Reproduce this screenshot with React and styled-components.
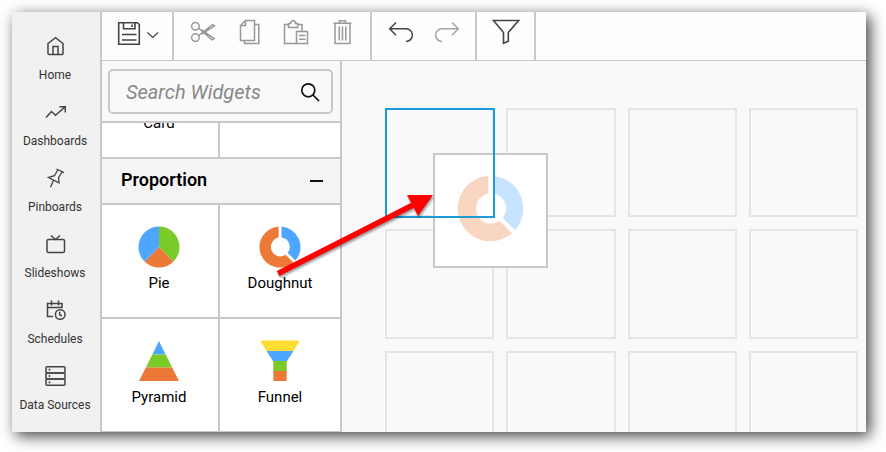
import React from "react";
import styled, { createGlobalStyle } from "styled-components";

const LINE = "#c8c8c8";

const GlobalStyle = createGlobalStyle`
  *, *::before, *::after { box-sizing: border-box; }
  body {
    margin: 0;
    background: #fff;
    font-family: Roboto, "Liberation Sans", sans-serif;
    color: #000;
  }
  button { font: inherit; color: inherit; }
`;

const Frame = styled.div`
  position: relative;
  display: flex;
  height: calc(100vh - 32px);
  margin: 12px 20px 20px 12px;
  background: #f9f9f9;
  box-shadow: 4px 4px 14px rgba(0, 0, 0, 0.75);
`;

const Sidebar = styled.nav`
  flex: none;
  display: flex;
  flex-direction: column;
  gap: 18px;
  width: 90px;
  padding: 23px 2px 0 0;
  overflow: hidden;
  background: #f1f1f1;
  border-right: 2px solid ${LINE};
`;

const NavLink = styled.a`
  display: flex;
  flex-direction: column;
  align-items: center;
  gap: 10px;
  color: #333;
  font-size: 12px;
  line-height: 16px;
  white-space: nowrap;
  text-decoration: none;
`;

const LineIcon = styled.svg`
  flex: none;
  display: block;
  fill: none;
  stroke: ${(p) => p.$color || "#444"};
  stroke-width: ${(p) => p.$weight || 1.5};
`;

const Main = styled.div`
  flex: 1;
  min-width: 0;
  display: flex;
  flex-direction: column;
`;

const Toolbar = styled.div`
  flex: none;
  display: grid;
  grid-template-columns: 72px 198px 105px 59px 1fr;
  height: 49px;
  background: #fdfdfd;
  border-bottom: 1px solid ${LINE};
`;

const ToolGroup = styled.div`
  display: flex;
  align-items: flex-start;
  gap: ${(p) => p.$gap || 0}px;
  padding: 4px 0 0 13px;
  border-right: 2px solid ${LINE};
`;

const ToolButton = styled.button`
  display: flex;
  align-items: center;
  height: 32px;
  padding: 0;
  background: none;
  border: 0;
`;

const Workspace = styled.div`
  flex: 1;
  min-height: 0;
  display: flex;
`;

const Panel = styled.aside`
  flex: none;
  width: 240px;
  overflow: hidden;
  background: #fff;
  border-right: 2px solid ${LINE};
`;

const SearchArea = styled.div`
  padding: 8px 7px 7px 6px;
  background: #f9f9f9;
  border-bottom: 2px solid ${LINE};
`;

const SearchBox = styled.label`
  display: flex;
  align-items: center;
  height: 45px;
  padding: 0 11px 0 16px;
  border: 2px solid ${LINE};
  border-radius: 5px;
`;

const SearchInput = styled.input`
  flex: 1;
  min-width: 0;
  padding: 0;
  background: none;
  border: 0;
  outline: 0;
  font: italic 20px/24px Roboto, "Liberation Sans", sans-serif;
  &::placeholder { color: #888; opacity: 1; }
`;

const TileRow = styled.div`
  display: grid;
  grid-template-columns: 118px 1fr;
  align-content: end;
  height: ${(p) => (p.$scrolled ? 36 : 114)}px;
  overflow: hidden;
  border-bottom: 2px solid ${LINE};
`;

const Tile = styled.button`
  display: flex;
  flex-direction: column;
  align-items: center;
  gap: 5px;
  height: 112px;
  padding: 21px 2px 0 0;
  background: #fff;
  border: 0;
  font-size: 15px;
  line-height: 20px;
  &:first-child { border-right: 2px solid ${LINE}; }
  &:last-child { padding-right: 0; }
`;

const TileArt = styled.svg`
  display: block;
  width: 42px;
  height: 42px;
`;

const SectionHeader = styled.button`
  display: flex;
  align-items: center;
  justify-content: space-between;
  width: 100%;
  height: 46px;
  padding: 0 17px 2px 19px;
  background: #f4f4f4;
  border: 0;
  border-bottom: 2px solid ${LINE};
  font-size: 18px;
  font-weight: 600;
  line-height: 24px;
`;

const Minus = styled.span`
  width: 13px;
  height: 2px;
  margin-top: 2px;
  background: #111;
`;

const Canvas = styled.main`
  flex: 1;
  min-width: 0;
  overflow: hidden;
  padding: 47px 8px 0 43px;
`;

const Board = styled.div`
  display: grid;
  grid-template-columns: repeat(4, 1fr);
  gap: 12px;
`;

const Cell = styled.div`
  position: relative;
  aspect-ratio: 1;
  border: 2px solid #e5e5e5;
`;

const DropTarget = styled.div`
  position: absolute;
  z-index: 3;
  inset: -2px -3px -3px -2px;
  border: 2px solid #1c9ad6;
`;

const DragGhost = styled.div`
  position: absolute;
  z-index: 2;
  top: 43px;
  left: 46px;
  display: flex;
  justify-content: center;
  width: 115px;
  height: 115px;
  padding-top: 20px;
  background: #fff;
  border: 2px solid ${LINE};
`;

const GhostArt = styled.svg`
  width: 67px;
  height: 67px;
  opacity: 0.3;
`;

const DragArrow = styled.svg`
  position: absolute;
  z-index: 4;
  top: 176px;
  left: 258px;
  width: 170px;
  height: 96px;
  pointer-events: none;
  filter: drop-shadow(1px 2px 1px rgba(0, 0, 0, 0.4));
`;

const nav = [
  { label: "Home", art: <path d="M4 8.5 11.500 2.700 19 8.500V18.500a1 1 0 0 1-1 1H5a1 1 0 0 1-1-1ZM9 19.500v-8h5v8" /> },
  { label: "Dashboards", art: <path d="M2 16.500 7.500 10.500l4 3.700L21 6M15.500 5.700h5.800v5.800" /> },
  { label: "Pinboards", art: <path strokeWidth="1.3" d="M12.500 2l7.500 3.700M13.800 2.800 10.500 8.700 4.500 10.500l10.500 5.300-.4-5.300 3.600-5.600M9.500 13.300l-3 7" /> },
  {
    label: "Slideshows",
    art: (
      <>
        <rect x="3" y="6.5" width="17.5" height="13" rx="1.5" />
        <path d="M7 2.500 11.500 6.500l4.500-4" />
      </>
    ),
  },
  {
    label: "Schedules",
    art: (
      <>
        <path d="M9 17.500H3.500v-13H18V8.500H3.500M7.500 1.500v5M14.500 1.500v5" />
        <circle cx="16.200" cy="15.500" r="4.800" />
        <path d="M15.700 12.800v3l2.200 1.200" />
      </>
    ),
  },
  {
    label: "Data Sources",
    art: (
      <>
        <rect x="2" y="1.700" width="19" height="6.200" rx="1" />
        <rect x="2" y="7.900" width="19" height="6.200" rx="1" />
        <rect x="2" y="14.100" width="19" height="6.200" rx="1" />
        <circle cx="5.500" cy="4.800" r="0.700" strokeWidth="1" />
        <circle cx="5.500" cy="11" r="0.700" strokeWidth="1" />
        <circle cx="5.500" cy="17.200" r="0.700" strokeWidth="1" />
      </>
    ),
  },
];

const edit = [
  {
    label: "Cut",
    art: (
      <>
        <circle cx="8.4" cy="10.2" r="3.8" />
        <circle cx="8.4" cy="21.6" r="3.8" />
        <path d="M11.7 12.3 25 23.8l2.2-1.2L14.7 13.8M11.7 19.5 25.5 8.6l2 1.2L14.7 18" />
      </>
    ),
  },
  {
    label: "Copy",
    art: <path d="M11.5 4.5H20.5v20H6.5V9.5ZM11.5 4.5v5h-5M20.5 8.5h4.3v19H10.5v-3" />,
  },
  {
    label: "Paste",
    art: (
      <>
        <path d="M15.5 27.5H3.5V8.5h4M16.5 8.5h4.5v7M7.5 11.5v-4H9.7V6.2L11 4.7h2.2l1.3 1.5V7.5h2.2v4Z" />
        <path d="M15.5 15.5h11v12h-11ZM18 19.5h6.5M18 23.2h6.5" />
      </>
    ),
  },
  {
    label: "Delete",
    art: <path d="M5.5 7.3h18M11.5 7V4.7h6V7M7 7.5v20h15v-20M11.3 10.5v14M14.5 10.5v14M17.8 10.5v14" />,
  },
];

function Icon({ size = 32, children, color, weight }) {
  return (
    <LineIcon width={size} height={size} viewBox={`0 0 ${size} ${size}`} $color={color} $weight={weight} aria-hidden="true">
      {children}
    </LineIcon>
  );
}

function DoughnutShape() {
  return (
    <>
      <path fill="#4da6ff" d="M22.5 .6A20.5 20.5 0 0 1 36.4 34.6L28.7 26.9A9.5 9.5 0 0 0 22.5 11.6Z" />
      <path fill="#ec7938" d="M19.6 .6V11.6A9.5 9.5 0 1 0 26.7 28.8L34.4 36.5A20.5 20.5 0 1 1 19.6 .6Z" />
    </>
  );
}

function PieShape() {
  return (
    <>
      <path fill="#7acb28" d="M21 21V.5A20.5 20.5 0 0 1 35.5 35.5Z" />
      <path fill="#ec7938" d="M21 21 35.5 35.5A20.5 20.5 0 0 1 6.5 35.5Z" />
      <path fill="#4da6ff" d="M21 21 6.5 35.5A20.5 20.5 0 0 1 21 .5Z" />
    </>
  );
}

function PyramidShape() {
  return (
    <>
      <path fill="#4da6ff" d="M21 1 27.7 14.5H14.3Z" />
      <path fill="#7acb28" d="M14.3 14.5H27.7L34.2 27.5H7.8Z" />
      <path fill="#ec7938" d="M7.8 27.5H34.2L41 41H1Z" />
    </>
  );
}

function FunnelShape() {
  return (
    <>
      <path fill="#ffdd33" d="M3 .5H39Q40.5 .8 39.7 2.5L34.5 11H7.5L2.3 2.5Q1.5 .8 3 .5Z" />
      <path fill="#4da6ff" d="M7.5 11H34.5L28 21H14Z" />
      <path fill="#7acb28" d="M14.3 21H27.7V31H14.3Z" />
      <path fill="#ec7938" d="M14.3 31H27.7V40Q27.7 41 26.7 41H15.3Q14.3 41 14.3 40Z" />
    </>
  );
}

function WidgetTile({ label, children }) {
  return (
    <Tile type="button">
      <TileArt viewBox="0 0 42 42" aria-hidden="true">{children}</TileArt>
      {label}
    </Tile>
  );
}

export default function App() {
  return (
    <>
      <GlobalStyle />
      <Frame>
        <Sidebar>
          {nav.map(({ label, art }) => (
            <NavLink href="#" key={label}>
              <Icon size={22}>{art}</Icon>
              {label}
            </NavLink>
          ))}
        </Sidebar>
        <Main>
          <Toolbar>
            <ToolGroup>
              <ToolButton type="button" aria-label="Save">
                <Icon weight={1.6}>
                  <path d="M3.7 6.7H22.5L24.3 8.5V28.3H3.7ZM8.5 6.7v6h11.5v-6M17 8.5v2.5" />
                  <path d="M7 18.5h14.5M7 24h14.5" />
                </Icon>
              </ToolButton>
              <ToolButton type="button" aria-label="Save options">
                <Icon size={12} weight={1.2}>
                  <path d="M.5 6.5 5.8 11.500 11 6.5" />
                </Icon>
              </ToolButton>
            </ToolGroup>
            <ToolGroup $gap={15}>
              {edit.map(({ label, art }) => (
                <ToolButton type="button" key={label} aria-label={label}>
                  <Icon color="#999">{art}</Icon>
                </ToolButton>
              ))}
            </ToolGroup>
            <ToolGroup $gap={15}>
              <ToolButton type="button" aria-label="Undo">
                <Icon><path d="M11 6.5 4.7 12.7 11 19.3M4.7 12.7H21a6.4 6.4 0 0 1 0 12.8" /></Icon>
              </ToolButton>
              <ToolButton type="button" aria-label="Redo">
                <Icon color="#a5a5a5"><path d="M20 6.5 26.3 12.7 20 19.3M26.3 12.7H10a6.4 6.4 0 0 0 0 12.8" /></Icon>
              </ToolButton>
            </ToolGroup>
            <ToolGroup>
              <ToolButton type="button" aria-label="Filter">
                <Icon weight={1.6}><path d="M3.5 4.5H28.7L18.3 16.5V25.2L13.5 27.3V16.5Z" /></Icon>
              </ToolButton>
            </ToolGroup>
          </Toolbar>
          <Workspace>
            <Panel>
              <SearchArea>
                <SearchBox>
                  <SearchInput type="text" placeholder="Search Widgets" aria-label="Search Widgets" />
                  <Icon size={20} color="#111" weight={1.7}>
                    <circle cx="8.3" cy="8.3" r="6.5" />
                    <path d="M13 13 19 19" />
                  </Icon>
                </SearchBox>
              </SearchArea>
              <TileRow $scrolled>
                <WidgetTile label="Card" />
                <Tile as="div" />
              </TileRow>
              <SectionHeader type="button" aria-expanded="true">
                Proportion
                <Minus />
              </SectionHeader>
              <TileRow>
                <WidgetTile label="Pie"><PieShape /></WidgetTile>
                <WidgetTile label="Doughnut"><DoughnutShape /></WidgetTile>
              </TileRow>
              <TileRow>
                <WidgetTile label="Pyramid"><PyramidShape /></WidgetTile>
                <WidgetTile label="Funnel"><FunnelShape /></WidgetTile>
              </TileRow>
            </Panel>
            <Canvas>
              <Board>
                {Array.from({ length: 12 }, (_, i) => (
                  <Cell key={i}>
                    {i === 0 && (
                      <>
                        <DragGhost>
                          <GhostArt viewBox="0 0 42 42" aria-hidden="true"><DoughnutShape /></GhostArt>
                        </DragGhost>
                        <DropTarget />
                      </>
                    )}
                  </Cell>
                ))}
              </Board>
            </Canvas>
          </Workspace>
        </Main>
        <DragArrow viewBox="0 0 170 96" aria-hidden="true">
          <path d="M8 85.5 143 17" fill="none" stroke="#f00" strokeWidth="5.5" />
          <path d="M137 7H163L148 28Z" fill="#f00" />
        </DragArrow>
      </Frame>
    </>
  );
}
